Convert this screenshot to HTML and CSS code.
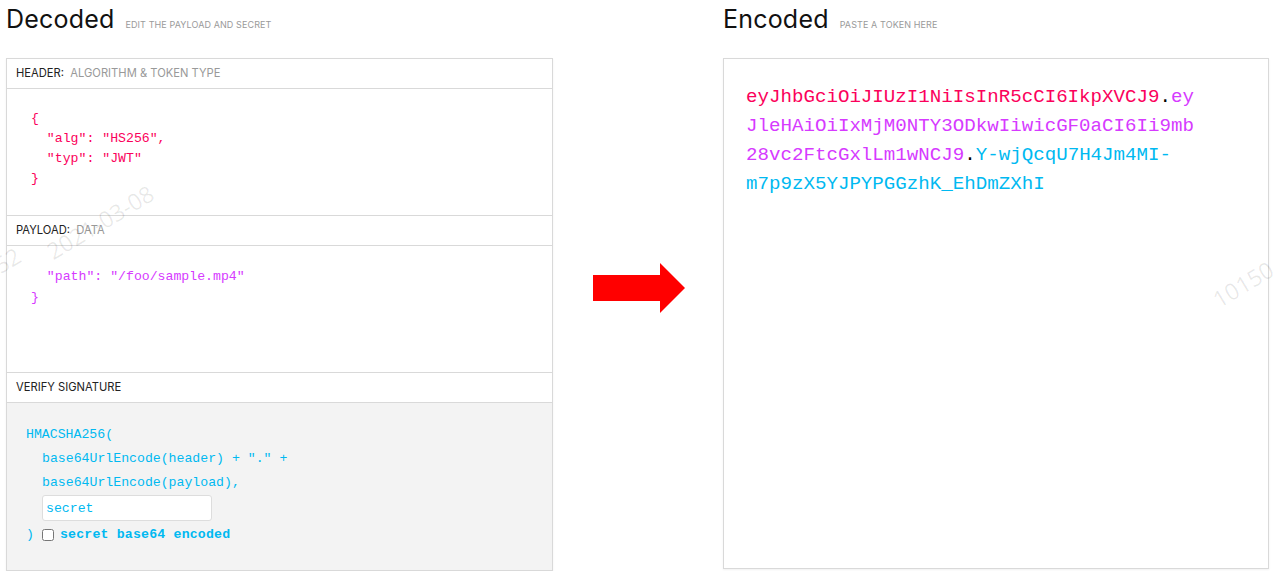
FILE: index.html
```html
<!DOCTYPE html>
<html lang="en">
<head>
  <meta charset="UTF-8" />
  <title>JWT Debugger</title>
  <meta name="viewport" content="width=device-width, initial-scale=1.0" />
  <link rel="stylesheet" href="styles.css">
</head>
<body>

  <div class="jwt-debugger">

    <!-- Decoded column -->
    <section class="jwt-col">
      <div class="jwt-col-head">
        <h2 class="jwt-col-title">Decoded</h2>
        <span class="jwt-col-hint">EDIT THE PAYLOAD AND SECRET</span>
      </div>
      <div class="jwt-panel jwt-decoded">
        <div class="jwt-section-label">HEADER:&nbsp; <span class="jwt-muted">ALGORITHM &amp; TOKEN TYPE</span></div>
        <pre class="jwt-code jwt-header-code">{
  "alg": "HS256",
  "typ": "JWT"
}</pre>
        <div class="jwt-section-label">PAYLOAD:&nbsp; <span class="jwt-muted">DATA</span></div>
        <pre class="jwt-code jwt-payload-code">  "path": "/foo/sample.mp4"
}</pre>
        <div class="jwt-section-label">VERIFY SIGNATURE</div>
        <div class="jwt-code jwt-verify">
          <div>HMACSHA256(</div>
          <div class="jwt-indent">base64UrlEncode(header) + "." +</div>
          <div class="jwt-indent">base64UrlEncode(payload),</div>
          <div class="jwt-indent"><input class="jwt-secret" type="text" value="secret"></div>
          <div class="jwt-verify-end">) <input type="checkbox" class="jwt-check"> <b>secret base64 encoded</b></div>
        </div>
      </div>
    </section>

    <!-- Arrow -->
    <div class="jwt-arrow">
      <svg width="92" height="50" viewBox="0 0 92 50">
        <polygon points="0,12 67,12 67,0 92,25 67,50 67,38 0,38" fill="#ff0000" />
      </svg>
    </div>

    <!-- Encoded column -->
    <section class="jwt-col">
      <div class="jwt-col-head">
        <h2 class="jwt-col-title">Encoded</h2>
        <span class="jwt-col-hint">PASTE A TOKEN HERE</span>
      </div>
      <div class="jwt-panel jwt-encoded">
        <div class="jwt-token"><span class="jwt-red">eyJhbGciOiJIUzI1NiIsInR5cCI6IkpXVCJ9</span><span class="jwt-dot">.</span><span class="jwt-purple">eyJleHAiOiIxMjM0NTY3ODkwIiwicGF0aCI6Ii9mb28vc2FtcGxlLm1wNCJ9</span><span class="jwt-dot">.</span><span class="jwt-blue">Y-wjQcqU7H4Jm4MI-m7p9zX5YJPYPGGzhK_EhDmZXhI</span></div>
      </div>
    </section>
  </div>

  <!-- watermark -->
  <div class="jwt-watermark jwt-wm-date">2021-03-08</div>
  <div class="jwt-watermark jwt-wm-left">52</div>
  <div class="jwt-watermark jwt-wm-right">10150</div>

</body>
</html>
```

FILE: styles.css
```css
:root {
  --jwt-red: #fb015b;
  --jwt-purple: #d63aff;
  --jwt-blue: #00b9f1;
  --jwt-border: #d9d9d9;
  --jwt-mono: "Liberation Mono", "DejaVu Sans Mono", monospace;
}

body {
  margin: 0;
  font-family: Inter, "Open Sans", sans-serif;
  background: #fff;
  color: #111;
  overflow: hidden;
}

.jwt-debugger {
  display: grid;
  grid-template-columns: 547px 170px 546px;
  padding-left: 6px;
}

.jwt-col-head {
  display: flex;
  align-items: baseline;
  gap: 11px;
  height: 58px;
}

.jwt-col-title {
  margin: 0;
  font-size: 25px;
  font-weight: 400;
  line-height: 38px;
  letter-spacing: 0.2px;
}

.jwt-col-hint {
  font-size: 9px;
  color: #9a9a9a;
  letter-spacing: 0.1px;
}

.jwt-panel {
  border: 1px solid var(--jwt-border);
  box-shadow: 0 1px 2px rgba(0,0,0,0.06);
  height: 511px;
}

.jwt-decoded {
  display: flex;
  flex-direction: column;
}

.jwt-section-label {
  height: 29px;
  line-height: 29px;
  padding-left: 9px;
  font-size: 11.2px;
  color: #222;
  border-bottom: 1px solid var(--jwt-border);
}

.jwt-code + .jwt-section-label {
  border-top: 1px solid var(--jwt-border);
}

.jwt-muted {
  color: #999;
}

.jwt-code {
  margin: 0;
  font-family: var(--jwt-mono);
  font-size: 13.2px;
}

.jwt-header-code {
  height: 126px;
  box-sizing: border-box;
  padding: 20px 0 0 24px;
  line-height: 20px;
  color: var(--jwt-red);
}

.jwt-payload-code {
  height: 126px;
  box-sizing: border-box;
  padding: 20px 0 0 24px;
  line-height: 21px;
  color: var(--jwt-purple);
}

.jwt-verify {
  flex: 1;
  background: #f3f3f3;
  color: var(--jwt-blue);
  padding: 20px 0 0 19px;
  line-height: 24px;
}

.jwt-indent {
  padding-left: 16px;
}

.jwt-secret {
  display: block;
  width: 170px;
  height: 26px;
  box-sizing: border-box;
  margin: 0;
  border: 1px solid #ddd;
  border-radius: 3px;
  background: #fff;
  padding: 0 3px;
  font-family: var(--jwt-mono);
  font-size: 13.2px;
  color: var(--jwt-blue);
  outline: none;
}

.jwt-verify-end {
  display: flex;
  align-items: center;
  gap: 6px;
  margin-top: 2px;
}

.jwt-check {
  width: 12px;
  height: 12px;
  margin: 0 0 0 2px;
}

.jwt-verify-end b {
  font-weight: 700;
  letter-spacing: 0.2px;
}

.jwt-arrow {
  display: flex;
  justify-content: center;
  padding-top: 263px;
  padding-left: 2px;
}

.jwt-arrow svg {
  display: block;
}

.jwt-encoded {
  padding: 24px 0 0 22px;
  box-sizing: border-box;
}

.jwt-token {
  width: 452px;
  font-family: var(--jwt-mono);
  font-size: 19.15px;
  line-height: 29px;
  overflow-wrap: anywhere;
}

.jwt-red { color: var(--jwt-red); }
.jwt-purple { color: var(--jwt-purple); }
.jwt-blue { color: var(--jwt-blue); }
.jwt-dot { color: #000; }

.jwt-watermark {
  position: absolute;
  color: rgba(0,0,0,0.09);
  font-family: "Open Sans", sans-serif;
  font-size: 23px;
  transform: rotate(-31deg);
  pointer-events: none;
  white-space: nowrap;
}

.jwt-wm-date {
  left: 40px;
  top: 206px;
}

.jwt-wm-left {
  left: -6px;
  top: 244px;
}

.jwt-wm-right {
  left: 1210px;
  top: 268px;
}
```
